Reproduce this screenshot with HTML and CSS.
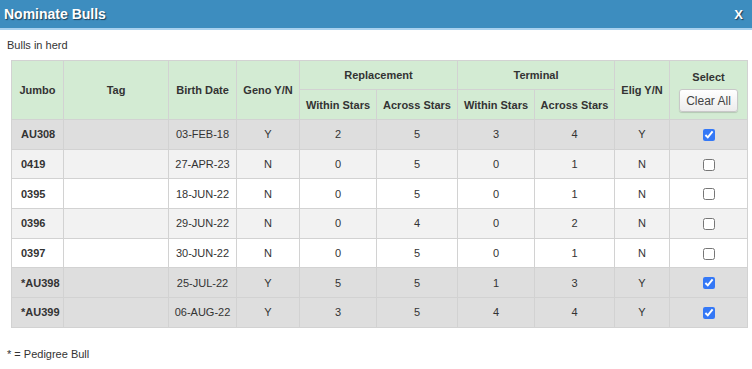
FILE: index.html
```html
<!DOCTYPE html>
<html lang="en">
<head>
    <meta charset="UTF-8">
    <title>Nominate Bulls</title>
    <link rel="stylesheet" href="styles.css">
</head>
<body>

    <div class="modal">
        <div class="modal-header">
            <span class="modal-title">Nominate Bulls</span>
            <span class="close-btn">X</span>
        </div>
        <div class="modal-body">
            <p class="caption">Bulls in herd</p>
            <table class="bulls">
                <colgroup>
                    <col style="width:52px">
                    <col style="width:105px">
                    <col style="width:68px">
                    <col style="width:63px">
                    <col style="width:77px">
                    <col style="width:81px">
                    <col style="width:77px">
                    <col style="width:80px">
                    <col style="width:55px">
                    <col style="width:78px">
                </colgroup>
                <thead>
                    <tr class="head-top">
                        <th rowspan="2">Jumbo</th>
                        <th rowspan="2">Tag</th>
                        <th rowspan="2">Birth Date</th>
                        <th rowspan="2">Geno Y/N</th>
                        <th colspan="2">Replacement</th>
                        <th colspan="2">Terminal</th>
                        <th rowspan="2">Elig Y/N</th>
                        <th rowspan="2" class="select-col">Select<br><button class="clear-btn">Clear All</button></th>
                    </tr>
                    <tr class="head-sub">
                        <th>Within Stars</th>
                        <th>Across Stars</th>
                        <th>Within Stars</th>
                        <th>Across Stars</th>
                    </tr>
                </thead>
                <tbody>
                    <tr class="picked">
                        <td class="jumbo">AU308</td><td></td><td>03-FEB-18</td><td>Y</td>
                        <td>2</td><td>5</td><td>3</td><td>4</td><td>Y</td>
                        <td><input type="checkbox" checked></td>
                    </tr>
                    <tr class="odd">
                        <td class="jumbo">0419</td><td></td><td>27-APR-23</td><td>N</td>
                        <td>0</td><td>5</td><td>0</td><td>1</td><td>N</td>
                        <td><input type="checkbox"></td>
                    </tr>
                    <tr>
                        <td class="jumbo">0395</td><td></td><td>18-JUN-22</td><td>N</td>
                        <td>0</td><td>5</td><td>0</td><td>1</td><td>N</td>
                        <td><input type="checkbox"></td>
                    </tr>
                    <tr class="odd">
                        <td class="jumbo">0396</td><td></td><td>29-JUN-22</td><td>N</td>
                        <td>0</td><td>4</td><td>0</td><td>2</td><td>N</td>
                        <td><input type="checkbox"></td>
                    </tr>
                    <tr>
                        <td class="jumbo">0397</td><td></td><td>30-JUN-22</td><td>N</td>
                        <td>0</td><td>5</td><td>0</td><td>1</td><td>N</td>
                        <td><input type="checkbox"></td>
                    </tr>
                    <tr class="picked">
                        <td class="jumbo">*AU398</td><td></td><td>25-JUL-22</td><td>Y</td>
                        <td>5</td><td>5</td><td>1</td><td>3</td><td>Y</td>
                        <td><input type="checkbox" checked></td>
                    </tr>
                    <tr class="picked">
                        <td class="jumbo">*AU399</td><td></td><td>06-AUG-22</td><td>Y</td>
                        <td>3</td><td>5</td><td>4</td><td>4</td><td>Y</td>
                        <td><input type="checkbox" checked></td>
                    </tr>
                </tbody>
            </table>
            <p class="footnote">* = Pedigree Bull</p>
        </div>
    </div>

</body>
</html>
```

FILE: styles.css
```css
body {
    margin: 0;
    font-family: "Liberation Sans", Arial, sans-serif;
    background: #fff;
    color: #333;
}
.modal {
    width: 752px;
}
.modal-header {
    height: 28px;
    background: #3d8dbf;
    border-bottom: 2px solid #a9d1ee;
    display: flex;
    justify-content: space-between;
    align-items: center;
    padding: 0 9px 0 4px;
}
.modal-title,
.close-btn {
    color: #fff;
    font-weight: bold;
    font-size: 14px;
    text-shadow: 1px 1px 1px #1c3d55;
}
.close-btn {
    font-size: 13px;
}
.modal-body {
    padding: 0 0 0 11px;
}
.caption {
    margin: 0;
    padding: 9px 0 0 0;
    margin-left: -4px;
    height: 21px;
    font-size: 11px;
    line-height: 13px;
}
.bulls {
    border-collapse: collapse;
    table-layout: fixed;
    width: 736px;
    font-size: 11px;
}
.bulls th,
.bulls td {
    border: 1px solid #d2d2d2;
    text-align: center;
    padding: 0;
}
.bulls th {
    background: #d3ebd3;
    font-weight: bold;
    color: #333;
}
.head-top {
    height: 29px;
}
.head-sub {
    height: 30px;
}
.select-col {
    line-height: 18px;
    padding-top: 3px;
}
.clear-btn {
    margin-top: 3px;
    width: 59px;
    height: 23px;
    font-family: "Liberation Sans", Arial, sans-serif;
    font-size: 12px;
    color: #444;
    background: linear-gradient(#ffffff, #ececec);
    border: 1px solid #c8c8c8;
    border-radius: 3px;
    box-shadow: 0 1px 1px rgba(0, 0, 0, 0.15);
    padding: 0;
}
.bulls tbody tr {
    height: 29.7px;
    background: #fff;
}
.bulls tbody tr.odd {
    background: #f2f2f2;
}
.bulls tbody tr.picked {
    background: #dedede;
}
.bulls td.jumbo {
    text-align: left;
    padding-left: 9px;
    font-weight: bold;
}
.bulls input[type="checkbox"] {
    width: 12px;
    height: 12px;
    margin: 0;
    vertical-align: middle;
    accent-color: #3478f6;
}
.footnote {
    margin: 20px 0 0 -4px;
    font-size: 11px;
}
```
